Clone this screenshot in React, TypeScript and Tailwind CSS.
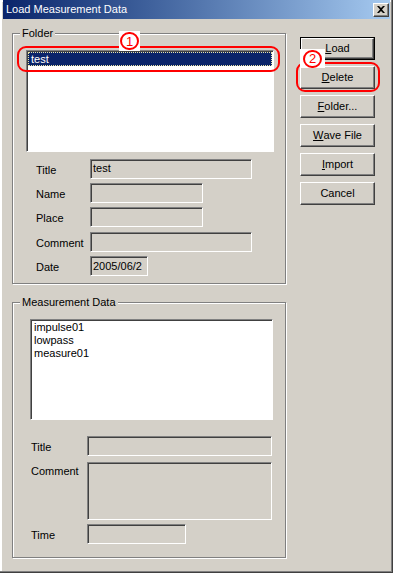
import React from 'react';

/* ── Win2000 classic bevels ─────────────────────────────── */
const SUNKEN =
  'border-t border-l border-b border-r border-t-[#808080] border-l-[#808080] border-b-white border-r-white shadow-[inset_1px_1px_0_#404040]';
const RAISED =
  'border-t border-l border-b border-r border-t-white border-l-white border-b-[#404040] border-r-[#404040] shadow-[inset_-1px_-1px_0_#808080]';
const ETCHED = 'relative border border-[#808080] shadow-[inset_1px_1px_0_#fff,1px_1px_0_#fff]';

function GroupLabel({ children }: { children: React.ReactNode }) {
  return (
    <span className="absolute left-[7px] -top-[8px] bg-[#d4d0c8] px-[2px] text-[11px] leading-[14px] text-black">
      {children}
    </span>
  );
}

function Field({ className, value }: { className: string; value?: string }) {
  return (
    <div className={`${SUNKEN} ${className} bg-[#d4d0c8] pl-[2px] text-[11px] leading-[17px] text-black overflow-hidden whitespace-nowrap`}>
      {value}
    </div>
  );
}

function Btn({ ul, rest, isDefault }: { ul?: string; rest: string; isDefault?: boolean }) {
  const inner = (
    <div className={`${RAISED} w-full h-full flex items-center justify-center text-[11px] text-black`}>
      {ul && <span className="underline underline-offset-[1px]">{ul}</span>}
      {rest}
    </div>
  );
  if (isDefault) {
    return <div className="w-[75px] h-[23px] border border-black">{inner}</div>;
  }
  return <div className="w-[75px] h-[23px]">{inner}</div>;
}

/* numbered callout: red ring with digit on a white patch */
function Callout({ n, className }: { n: string; className: string }) {
  return (
    <div className={`absolute ${className} bg-white flex items-center justify-center`}>
      <div className="w-[19px] h-[18px] rounded-full border-2 border-[#ff0000] flex items-center justify-center">
        <span className="text-[13px] leading-none text-[#ff0000]">{n}</span>
      </div>
    </div>
  );
}

export default function App() {
  return (
    <div className="relative w-[393px] h-[573px] bg-[#d4d0c8] overflow-hidden font-['Liberation_Sans',Arial,sans-serif] shadow-[inset_-1px_-1px_0_#404040,inset_-2px_-2px_0_#808080,inset_2px_2px_0_#fff]">
      {/* ── Title bar ───────────────── */}
      <div className="mx-[3px] h-[19px] flex items-center justify-between bg-gradient-to-r from-[#0a246a] to-[#a6caf0]">
        <span className="pl-[3px] text-[11px] text-white leading-none">Load Measurement Data</span>
        <div className={`${RAISED} mr-[1px] w-[16px] h-[14px] bg-[#d4d0c8] flex items-center justify-center`}>
          <svg width="8" height="7" viewBox="0 0 8 7">
            <path d="M0 0h2l2 2 2-2h2L5 3.5 8 7H6L4 5 2 7H0l3-3.5z" fill="#000" />
          </svg>
        </div>
      </div>

      {/* ── Body ───────────────────── */}
      <div className="flex pl-[12px] pt-[14px]">
        <div className="w-[274px] flex flex-col">
          {/* Folder group */}
          <div className={`${ETCHED} h-[251px] pl-[13px] pt-[16px]`}>
            <GroupLabel>Folder</GroupLabel>
            <div className={`${SUNKEN} w-[248px] h-[102px] bg-white p-[1px]`}>
              <div className="h-[14px] bg-[#0a246a] border border-dotted border-[#e8e4a8] text-[11px] leading-[12px] text-white pl-[2px]">
                test
              </div>
            </div>

            <div className="mt-[7px] flex flex-col gap-[4px] pl-[10px]">
              <div className="flex items-center">
                <span className="w-[54px] text-[11px] pt-[2px]">Title</span>
                <Field className="w-[162px] h-[20px]" value="test" />
              </div>
              <div className="flex items-center">
                <span className="w-[54px] text-[11px] pt-[2px]">Name</span>
                <Field className="w-[113px] h-[20px]" />
              </div>
              <div className="flex items-center">
                <span className="w-[54px] text-[11px] pt-[2px]">Place</span>
                <Field className="w-[113px] h-[20px]" />
              </div>
              <div className="flex items-center mt-[1px]">
                <span className="w-[54px] text-[11px] pt-[2px]">Comment</span>
                <Field className="w-[162px] h-[20px]" />
              </div>
              <div className="flex items-center">
                <span className="w-[54px] text-[11px] pt-[2px]">Date</span>
                <Field className="w-[58px] h-[20px] leading-[18px]" value="2005/06/2" />
              </div>
            </div>
          </div>

          {/* Measurement data group */}
          <div className={`${ETCHED} mt-[18px] h-[256px] pl-[17px] pt-[16px]`}>
            <GroupLabel>Measurement Data</GroupLabel>
            <div className={`${SUNKEN} w-[243px] h-[101px] bg-white pl-[3px] pt-[1px] text-[11px] leading-[13px] text-black`}>
              <div>impulse01</div>
              <div>lowpass</div>
              <div>measure01</div>
            </div>

            <div className="mt-[16px] flex flex-col pl-[1px]">
              <div className="flex items-center">
                <span className="w-[56px] text-[11px] pt-[2px]">Title</span>
                <Field className="w-[185px] h-[20px]" />
              </div>
              <div className="flex items-start mt-[6px]">
                <span className="w-[56px] text-[11px] pt-[1px]">Comment</span>
                <Field className="w-[185px] h-[58px]" />
              </div>
              <div className="flex items-center mt-[4px]">
                <span className="w-[56px] text-[11px] pt-[2px]">Time</span>
                <Field className="w-[99px] h-[20px]" />
              </div>
            </div>
          </div>
        </div>

        {/* Buttons */}
        <div className="ml-[14px] pt-[4px] flex flex-col gap-[6px]">
          <Btn ul="L" rest="oad" isDefault />
          <Btn ul="D" rest="elete" />
          <Btn ul="F" rest="older..." />
          <Btn ul="W" rest="ave File" />
          <Btn ul="I" rest="mport" />
          <Btn rest="Cancel" />
        </div>
      </div>

      {/* ── Annotations ────────────── */}
      <div className="absolute left-[17px] top-[46px] w-[263px] h-[26px] border-2 border-[#ff0000] rounded-[9px]" />
      <div className="absolute left-[296px] top-[62px] w-[84px] h-[30px] border-2 border-[#ff0000] rounded-[9px]" />
      <Callout n="1" className="left-[119px] top-[31px] w-[21px] h-[20px]" />
      <Callout n="2" className="left-[300px] top-[49px] w-[25px] h-[19px]" />
    </div>
  );
}
